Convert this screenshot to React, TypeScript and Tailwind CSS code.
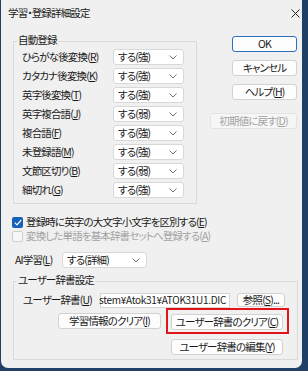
import React from "react";

const Chevron = () => (
  <svg width="8" height="5" viewBox="0 0 8 5">
    <path d="M0.5 0.5 L4 4 L7.5 0.5" fill="none" stroke="#707070" strokeWidth="1" />
  </svg>
);

function Select({ value, className }: { value: string; className: string }) {
  return (
    <div
      className={
        "flex h-[16px] items-center justify-between rounded-[3px] border border-[#d8d8d8] bg-white pl-[4px] pr-[6px] " +
        className
      }
    >
      <span>{value}</span>
      <Chevron />
    </div>
  );
}

function Btn({
  children,
  className,
  kind,
}: {
  children: React.ReactNode;
  className: string;
  kind?: "primary" | "disabled";
}) {
  const k =
    kind === "primary"
      ? "border-[#2a6fc0] bg-[#fdfdfd] text-[#1a1a1a]"
      : kind === "disabled"
      ? "border-[#e4e4e4] bg-[#f6f6f6] text-[#a3a3a3]"
      : "border-[#d2d2d2] bg-[#fdfdfd] text-[#1a1a1a]";
  return (
    <div className={"flex items-center justify-center rounded-[3px] border " + k + " " + className}>
      {children}
    </div>
  );
}

const M = ({ c }: { c: string }) => <span className="underline underline-offset-1">{c}</span>;

const rows: { label: string; key: string; value: string }[] = [
  { label: "ひらがな後変換", key: "R", value: "する(強)" },
  { label: "カタカナ後変換", key: "K", value: "する(強)" },
  { label: "英字後変換", key: "T", value: "する(強)" },
  { label: "英字複合語", key: "J", value: "する(弱)" },
  { label: "複合語", key: "F", value: "する(強)" },
  { label: "未登録語", key: "M", value: "する(強)" },
  { label: "文節区切り", key: "B", value: "する(弱)" },
  { label: "細切れ", key: "G", value: "する(強)" },
];

export default function App() {
  return (
    <div className="h-[371px] w-[308px] overflow-hidden bg-[#1f3f66] font-['Noto_Sans_CJK_JP',sans-serif] text-[10.5px] leading-none tracking-[-0.85px] text-[#1a1a1a] [font-feature-settings:'palt']">
      <div className="ml-[1px] flex h-[368px] w-[301px] flex-col rounded-b-[7px] bg-[#f0f0f0]">
        {/* title bar */}
        <div className="flex h-[26px] items-center justify-between pl-[7px] pr-[2px]">
          <span>学習・登録詳細設定</span>
          <svg width="9" height="9" viewBox="0 0 9 9">
            <path d="M0.5 0.5 L8.5 8.5 M8.5 0.5 L0.5 8.5" stroke="#222" strokeWidth="1" />
          </svg>
        </div>

        <div className="flex flex-col pt-[10px]">
          {/* top row */}
          <div className="flex items-start">
            <div className="relative ml-[12px] mt-[5px] h-[163px] w-[184px] border border-[#dadada]">
              <span className="absolute left-[3px] top-[-7px] bg-[#f0f0f0] px-[1px]">自動登録</span>
              <div className="flex flex-col gap-[3px] pt-[7px]">
                {rows.map((r) => (
                  <div key={r.key} className="flex h-[16px] items-center">
                    <span className="w-[99px] pl-[8px]">
                      {r.label}(<M c={r.key} />)
                    </span>
                    <Select value={r.value} className="w-[71px]" />
                  </div>
                ))}
              </div>
            </div>
            <div className="ml-[13px] flex w-[87px] flex-col items-end">
              <Btn kind="primary" className="h-[16px] w-[65px]">OK</Btn>
              <Btn className="mt-[8px] h-[16px] w-[65px]">キャンセル</Btn>
              <Btn className="mt-[8px] h-[16px] w-[65px]">
                ヘルプ(<M c="H" />)
              </Btn>
              <Btn kind="disabled" className="mt-[13px] h-[16px] w-[87px]">
                初期値に戻す(<M c="D" />)
              </Btn>
            </div>
          </div>

          {/* checkboxes */}
          <div className="mt-[11px] flex h-[14px] items-center pl-[11px]">
            <span className="flex h-[11px] w-[11px] items-center justify-center rounded-[2px] bg-[#1560b8]">
              <svg width="8" height="7" viewBox="0 0 8 7">
                <path d="M0.8 3.6 L3 5.8 L7.2 1" fill="none" stroke="white" strokeWidth="1.2" />
              </svg>
            </span>
            <span className="ml-[3px]">
              登録時に英字の大文字小文字を区別する(<M c="E" />)
            </span>
          </div>
          <div className="flex h-[14px] items-center pl-[11px] text-[#a3a3a3]">
            <span className="h-[11px] w-[11px] rounded-[2px] border border-[#cfcfcf] bg-[#f7f7f7]" />
            <span className="ml-[3px]">
              変換した単語を基本辞書セットへ登録する(<M c="A" />)
            </span>
          </div>

          {/* AI learning */}
          <div className="mt-[9px] flex h-[16px] items-center">
            <span className="w-[61px] pl-[14px]">
              AI学習(<M c="L" />)
            </span>
            <Select value="する(詳細)" className="w-[85px]" />
          </div>

          {/* user dictionary group */}
          <div className="relative ml-[12px] mt-[13px] h-[79px] w-[285px] border border-[#dadada]">
            <span className="absolute left-[3px] top-[-7px] bg-[#f0f0f0] px-[1px]">ユーザー辞書設定</span>
            <div className="flex flex-col pt-[10px]">
              <div className="flex h-[16px] items-center">
                <span className="w-[86px] pl-[9px]">
                  ユーザー辞書(<M c="U" />)
                </span>
                <div className="flex h-[15px] w-[130px] items-center justify-end border border-[#d4d4d4] bg-white pr-[3px]">
                  <span className="whitespace-nowrap text-[10px] tracking-[-0.3px]">
                    stem¥Atok31¥ATOK31U1.DIC
                  </span>
                </div>
                <Btn className="ml-[7px] h-[14px] w-[48px]">
                  参照(<M c="S" />)...
                </Btn>
              </div>
              <div className="mt-[5px] flex items-start">
                <Btn className="ml-[44px] h-[16px] w-[103px]">
                  学習情報のクリア(<M c="I" />)
                </Btn>
                <div className="ml-[10px] flex w-[112px] flex-col">
                  <div className="relative mt-[1px]">
                    <Btn className="h-[16px] w-[112px]">
                      ユーザー辞書のクリア(<M c="C" />)
                    </Btn>
                    <span className="absolute -bottom-[4px] -left-[5px] -right-[6px] -top-[6px] border-2 border-[#e3131b]" />
                  </div>
                  <Btn className="mt-[9px] h-[16px] w-[112px]">
                    ユーザー辞書の編集(<M c="Y" />)
                  </Btn>
                </div>
              </div>
            </div>
          </div>
        </div>
      </div>
    </div>
  );
}
